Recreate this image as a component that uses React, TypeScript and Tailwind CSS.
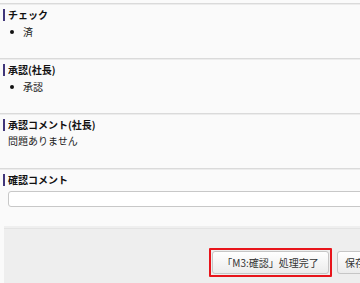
import React from 'react';

const Heading: React.FC<{ children: React.ReactNode }> = ({ children }) => (
  <h3 className="ml-[3px] border-l-2 border-[#41367a] pl-[3px] text-[10px] font-bold leading-[12px] text-[#111]">
    {children}
  </h3>
);

const Bullet: React.FC<{ children: React.ReactNode }> = ({ children }) => (
  <li className="flex items-center gap-[9px] pl-[10px] text-[10px] leading-[14px] text-[#222]">
    <span className="h-[4px] w-[4px] rounded-full bg-[#111]" />
    {children}
  </li>
);

const Section: React.FC<{ children: React.ReactNode }> = ({ children }) => (
  <section className="h-[55px] border-t border-[#dadada] pt-[5px] shadow-[inset_0_1px_0_#ececec]">
    {children}
  </section>
);

export default function App() {
  return (
    <div
      className="h-[283px] w-[360px] overflow-hidden bg-[#fafafa] pt-[3px]"
      style={{ fontFamily: '"Noto Sans CJK JP", "Noto Sans", sans-serif' }}
    >
      <Section>
        <Heading>チェック</Heading>
        <ul className="mt-[4px]">
          <Bullet>済</Bullet>
        </ul>
      </Section>

      <Section>
        <Heading>承認(社長)</Heading>
        <ul className="mt-[4px]">
          <Bullet>承認</Bullet>
        </ul>
      </Section>

      <Section>
        <Heading>承認コメント(社長)</Heading>
        <p className="mt-[3px] pl-[8px] text-[10px] leading-[14px] text-[#222]">問題ありません</p>
      </Section>

      <section className="h-[58px] border-t border-[#dadada] pt-[5px] shadow-[inset_0_1px_0_#ececec]">
        <Heading>確認コメント</Heading>
        <input
          type="text"
          className="ml-[8px] mt-[5px] block h-[16px] w-[360px] rounded-[3px] border border-[#c8c8c8] bg-white"
        />
      </section>

      <div className="ml-[4px] h-[60px] border-t-2 border-[#efefef] bg-[#eeeeee] shadow-[inset_0_1px_0_#e3e3e3]">
        <div className="flex items-center gap-[5px] pl-[205px] pt-[20px]">
          <div className="rounded-[1px] border-2 border-[#e8141b] p-px">
            <button className="flex h-[23px] w-[117px] items-center justify-center rounded-[3px] border border-[#c6c6c6] bg-gradient-to-b from-white to-[#ececec] text-[10px] text-[#333]">
              「M3:確認」処理完了
            </button>
          </div>
          <button className="flex h-[23px] w-[60px] shrink-0 items-center rounded-[3px] border border-[#c6c6c6] bg-gradient-to-b from-white to-[#ececec] pl-[7px] text-[10px] text-[#333]">
            保存
          </button>
        </div>
      </div>
    </div>
  );
}
